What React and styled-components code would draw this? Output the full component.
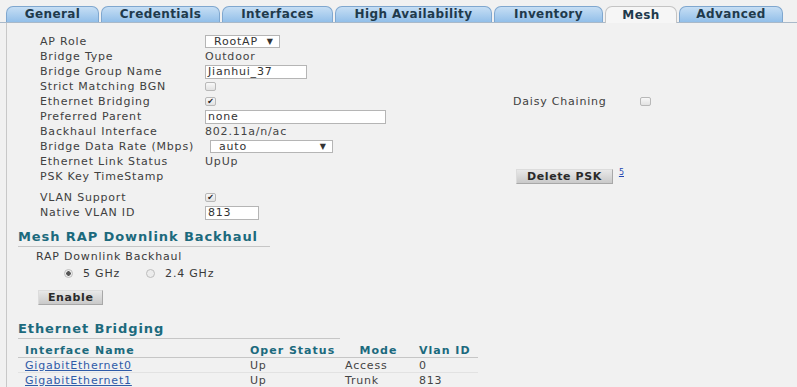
import { createGlobalStyle, styled } from 'styled-components'

const GlobalStyle = createGlobalStyle`
    html, body {
        margin: 0;
        background: #f1f1f1;
    }
    body {
        font-family: "DejaVu Sans", Verdana, sans-serif;
        font-size: 11px;
        line-height: 13px;
        letter-spacing: 0.8px;
        color: #3a3a3a;
    }
`

const Page = styled.div`
    width: 797px;
    height: 387px;
    overflow: hidden;
    padding-top: 5px;
    box-sizing: border-box;
`

const TabBar = styled.div`
    display: flex;
    align-items: flex-end;
    padding-left: 6px;
    gap: 2px;
    height: 17px;
    border-bottom: 1px solid #a9b9c9;
`

const Tab = styled.div`
    width: ${p => p.$w}px;
    box-sizing: border-box;
    display: flex;
    align-items: center;
    justify-content: center;
    font-weight: bold;
    font-size: 12px;
    letter-spacing: 0.4px;
    color: #1f3a4c;
    border: 1px solid ${p => (p.$active ? '#c4c4c4' : '#7fa7cf')};
    border-bottom: none;
    border-radius: 7px 7px 0 0;
    background: ${p => (p.$active ? '#f6f6f6' : 'linear-gradient(#c6def4, #92bfe9)')};
    margin-bottom: ${p => (p.$active ? '-1px' : '0')};
    height: ${p => (p.$active ? '17px' : '16px')};
`

const Panel = styled.div`
    border-left: 1px solid #c8c8c8;
    margin-left: 6px;
    padding: 11px 0 0 11px;
    height: 370px;
    box-sizing: border-box;
`

const Form = styled.div`
    display: grid;
    grid-template-columns: 165px 308px 127px auto;
    grid-auto-rows: 15px;
    align-items: center;
    margin-left: 22px;
    margin-top: ${p => p.$top || 0}px;
`

const Label = styled.div`
    white-space: nowrap;
    color: #404040;
`

const Value = styled.div`
    display: flex;
    align-items: center;
    gap: 6px;
    white-space: nowrap;
    padding-left: ${p => p.$shift || 0}px;
    color: #444;
`

const Select = styled.div`
    width: ${p => p.$w}px;
    height: 13px;
    box-sizing: border-box;
    background: #fff;
    border: 1px solid #b5b5b5;
    display: flex;
    align-items: center;
    justify-content: space-between;
    padding: 0 6px 0 8px;
    color: #333;
`

const Input = styled.div`
    width: ${p => p.$w}px;
    height: 14px;
    box-sizing: border-box;
    background: #fff;
    border: 1px solid #b5b5b5;
    padding-left: 2px;
    color: #333;
    display: flex;
    align-items: center;
`

const Check = styled.div`
    width: 11px;
    height: 9px;
    box-sizing: border-box;
    border: 1px solid #b8b8b8;
    border-radius: 2px;
    background: linear-gradient(#f8f8f8, #e2e2e2);
    display: flex;
    align-items: center;
    justify-content: center;
    font-size: 8px;
    line-height: 1;
    letter-spacing: 0;
    color: #222;
`

const Button = styled.div`
    height: 15px;
    padding: 0 ${p => p.$pad || 8}px;
    box-sizing: border-box;
    display: inline-flex;
    align-items: center;
    font-weight: bold;
    font-size: 11px;
    letter-spacing: 0.6px;
    color: #2a2a2a;
    background: linear-gradient(#e8e8e8, #c9c9c9);
    border: 1px solid #a8a8a8;
    border-top-color: #dcdcdc;
    border-left-color: #dcdcdc;
`

const Tiny = styled.a`
    font-size: 8px;
    letter-spacing: 0;
    color: #2447b0;
    text-decoration: underline;
    align-self: flex-start;
    line-height: 8px;
`

const Heading = styled.div`
    font-weight: bold;
    font-size: 13px;
    line-height: 15px;
    letter-spacing: 0.9px;
    color: #1c6a7d;
    width: ${p => p.$w}px;
    white-space: nowrap;
    border-bottom: 1px solid #c6c6c6;
    padding-bottom: 2px;
    margin-top: ${p => p.$top}px;
`

const Indent = styled.div`
    margin: 3px 0 0 18px;
`

const RadioRow = styled.div`
    display: flex;
    align-items: center;
    margin: 3px 0 0 46px;
    height: 14px;
`

const Radio = styled.span`
    width: 9px;
    height: 9px;
    border-radius: 50%;
    box-sizing: border-box;
    border: 1px solid #bdbdbd;
    background: ${p => (p.$on ? 'radial-gradient(#555 0 2px, #ececec 2.5px)' : '#ececec')};
    margin-right: 10px;
`

const RadioText = styled.span`
    margin-right: ${p => p.$gap || 0}px;
`

const ButtonRow = styled.div`
    margin: 10px 0 0 20px;
`

const Table = styled.table`
    border-collapse: collapse;
    margin-top: 4px;
    width: 460px;

    th {
        text-align: left;
        font-weight: bold;
        color: #1c6a7d;
        letter-spacing: 1px;
        padding: 0 0 0 7px;
        height: 14px;
        border-bottom: 1px solid #c6c6c6;
    }
    th.center {
        text-align: center;
    }
    td {
        padding: 0 0 0 7px;
        height: 14px;
        border-bottom: 1px solid #e2e2e2;
        color: #444;
    }
    a {
        color: #2f5ba8;
        text-decoration: underline;
    }
`

const tabs = [
    ['General', 93],
    ['Credentials', 119],
    ['Interfaces', 111],
    ['High Availability', 157],
    ['Inventory', 109],
    ['Mesh', 72],
    ['Advanced', 104],
]

const Arrow = styled.span`
    font-size: 8px;
    letter-spacing: 0;
`

export default function App() {
    return (
        <Page>
            <GlobalStyle />
            <TabBar>
                {tabs.map(([t, w]) => (
                    <Tab key={t} $w={w} $active={t === 'Mesh'}>{t}</Tab>
                ))}
            </TabBar>
            <Panel>
                <Form>
                    <Label>AP Role</Label>
                    <Value><Select $w={75}>RootAP <Arrow>▼</Arrow></Select></Value>
                    <div /><div />

                    <Label>Bridge Type</Label>
                    <Value>Outdoor</Value>
                    <div /><div />

                    <Label>Bridge Group Name</Label>
                    <Value><Input $w={102}>Jianhui_37</Input></Value>
                    <div /><div />

                    <Label>Strict Matching BGN</Label>
                    <Value><Check /></Value>
                    <div /><div />

                    <Label>Ethernet Bridging</Label>
                    <Value><Check>✔</Check></Value>
                    <Label>Daisy Chaining</Label>
                    <Value><Check /></Value>

                    <Label>Preferred Parent</Label>
                    <Value><Input $w={181}>none</Input></Value>
                    <div /><div />

                    <Label>Backhaul Interface</Label>
                    <Value>802.11a/n/ac</Value>
                    <div /><div />

                    <Label>Bridge Data Rate (Mbps)</Label>
                    <Value $shift={5}><Select $w={123}>auto <Arrow>▼</Arrow></Select></Value>
                    <div /><div />

                    <Label>Ethernet Link Status</Label>
                    <Value>UpUp</Value>
                    <div /><div />

                    <Label>PSK Key TimeStamp</Label>
                    <div />
                    <Value $shift={3}>
                        <Button $pad={10}>Delete PSK</Button>
                        <Tiny>5</Tiny>
                    </Value>
                    <div />
                </Form>
                <Form $top={6}>
                    <Label>VLAN Support</Label>
                    <Value><Check>✔</Check></Value>
                    <div /><div />

                    <Label>Native VLAN ID</Label>
                    <Value><Input $w={54}>813</Input></Value>
                    <div /><div />
                </Form>

                <Heading $w={252} $top={9}>Mesh RAP Downlink Backhaul</Heading>
                <Indent>RAP Downlink Backhaul</Indent>
                <RadioRow>
                    <Radio $on />
                    <RadioText $gap={26}>5 GHz</RadioText>
                    <Radio />
                    <RadioText>2.4 GHz</RadioText>
                </RadioRow>
                <ButtonRow><Button $pad={9}>Enable</Button></ButtonRow>

                <Heading $w={322} $top={16}>Ethernet Bridging</Heading>
                <Table>
                    <thead>
                        <tr>
                            <th style={{ width: 218 }}>Interface Name</th>
                            <th style={{ width: 88 }}>Oper Status</th>
                            <th className="center" style={{ width: 67 }}>Mode</th>
                            <th>Vlan ID</th>
                        </tr>
                    </thead>
                    <tbody>
                        <tr>
                            <td><a>GigabitEthernet0</a></td>
                            <td>Up</td>
                            <td>Access</td>
                            <td>0</td>
                        </tr>
                        <tr>
                            <td><a>GigabitEthernet1</a></td>
                            <td>Up</td>
                            <td>Trunk</td>
                            <td>813</td>
                        </tr>
                    </tbody>
                </Table>
            </Panel>
        </Page>
    )
}
